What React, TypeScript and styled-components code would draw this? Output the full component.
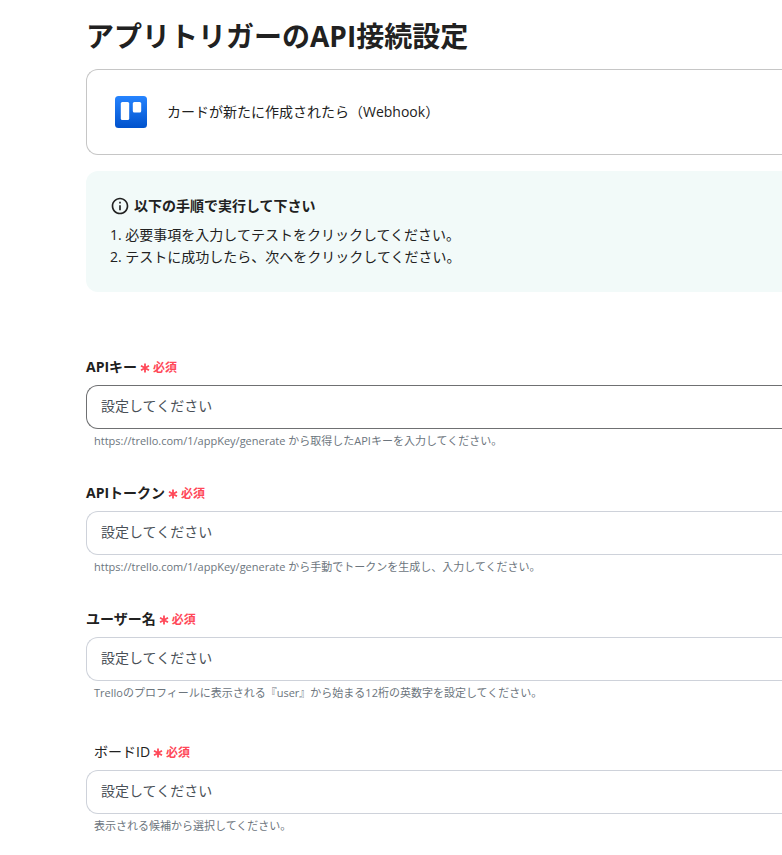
import React, { useId } from "react";
import styled, { createGlobalStyle } from "styled-components";

const GlobalStyle = createGlobalStyle`
  *, *::before, *::after { box-sizing: border-box; }
  body {
    margin: 0;
    background: #fff;
    color: #212121;
    font-family: "Open Sans", "Noto Sans CJK JP", sans-serif;
    font-size: 14px;
    line-height: 22px;
    overflow-x: hidden;
  }
`;

const Page = styled.main`
  padding: 16px 0 16px 86px;
`;

const Title = styled.h1`
  margin: 0 0 13px;
  font-size: 28px;
  line-height: 40px;
  font-weight: 700;
  white-space: nowrap;
`;

const TriggerCard = styled.section`
  display: flex;
  align-items: center;
  gap: 20px;
  min-height: 86px;
  padding: 0 28px;
  border: 1px solid #c6c6c6;
  border-right: 0;
  border-radius: 12px 0 0 12px;
`;

const Notice = styled.section`
  margin-top: 16px;
  padding: 24px;
  min-height: 121px;
  border-radius: 12px 0 0 12px;
  background: #f2faf9;
`;

const NoticeTitle = styled.h2`
  display: flex;
  align-items: center;
  gap: 4px;
  margin: 0 0 7px;
  font-size: 14px;
  line-height: 22px;
  font-weight: 700;
`;

const Steps = styled.ol`
  margin: 0;
  padding: 0;
  list-style-position: inside;
`;

const Form = styled.form`
  display: flex;
  flex-direction: column;
  gap: 33px;
  margin-top: 64px;
`;

const FieldBox = styled.div<{ $plain?: boolean }>`
  display: flex;
  flex-direction: column;
  padding-top: ${(p) => (p.$plain ? "7px" : "0")};
`;

const LabelRow = styled.div<{ $plain?: boolean }>`
  display: flex;
  align-items: center;
  gap: 3px;
  height: 22px;
  padding-left: ${(p) => (p.$plain ? "8px" : "0")};
  margin-bottom: 7px;
  font-weight: ${(p) => (p.$plain ? 400 : 700)};
`;

const Required = styled.span`
  display: flex;
  align-items: center;
  gap: 3px;
  padding-top: 2px;
  color: #ff4858;
  font-size: 12px;
  font-weight: 700;
`;

const Input = styled.input<{ $strong?: boolean }>`
  width: 100%;
  height: 44px;
  padding: 0 14px 4px;
  border: 1px solid ${(p) => (p.$strong ? "#6f7072" : "#ced2da")};
  border-right: 0;
  border-radius: 12px 0 0 12px;
  background: #fff;
  font: inherit;
  color: #212121;
  outline: none;
  &::placeholder { color: #495057; opacity: 1; }
`;

const Help = styled.p`
  margin: 3px 0 0 8px;
  color: #6c757d;
  font-size: 11px;
  line-height: 17px;
`;

const TrelloIcon = () => (
  <svg width="32" height="32" viewBox="0 0 32 32" aria-hidden="true">
    <defs>
      <linearGradient id="trello" x1="0" y1="0" x2="0" y2="1">
        <stop offset="0" stopColor="#2684ff" />
        <stop offset="1" stopColor="#0052cc" />
      </linearGradient>
    </defs>
    <rect width="32" height="32" rx="3.500" fill="url(#trello)" />
    <rect x="5.800" y="6" width="8.400" height="18" rx="1.500" fill="#fff" />
    <rect x="17.800" y="6" width="8.400" height="10.500" rx="1.500" fill="#fff" />
  </svg>
);

const InfoIcon = () => (
  <svg width="20" height="20" viewBox="0 0 24 24" fill="#212121" aria-hidden="true">
    <path d="M11 7h2v2h-2zm0 4h2v6h-2zm1-9C6.480 2 2 6.480 2 12s4.480 10 10 10 10-4.480 10-10S17.520 2 12 2zm0 18c-4.410 0-8-3.590-8-8s3.590-8 8-8 8 3.590 8 8-3.590 8-8 8z" />
  </svg>
);

const AsteriskIcon = () => (
  <svg width="10" height="10" viewBox="0 0 10 10" stroke="currentColor" strokeWidth="1.800" aria-hidden="true">
    <path d="M5 0.500v9M1 2.700l8 4.600M9 2.700l-8 4.600" />
  </svg>
);

type FieldProps = { label: string; help: string; strong?: boolean; plain?: boolean };

const Field = ({ label, help, strong, plain }: FieldProps) => {
  const id = useId();
  return (
    <FieldBox $plain={plain}>
      <LabelRow $plain={plain}>
        <label htmlFor={id}>{label}</label>
        <Required><AsteriskIcon />必須</Required>
      </LabelRow>
      <Input id={id} placeholder="設定してください" $strong={strong} aria-describedby={id + "-help"} required />
      <Help id={id + "-help"}>{help}</Help>
    </FieldBox>
  );
};

const fields: FieldProps[] = [
  { label: "APIキー", help: "https://trello.com/1/appKey/generate から取得したAPIキーを入力してください。", strong: true },
  { label: "APIトークン", help: "https://trello.com/1/appKey/generate から手動でトークンを生成し、入力してください。" },
  { label: "ユーザー名", help: "Trelloのプロフィールに表示される『user』から始まる12桁の英数字を設定してください。" },
  { label: "ボードID", help: "表示される候補から選択してください。", plain: true },
];

export default function App() {
  return (
    <>
      <GlobalStyle />
      <Page>
        <Title>アプリトリガーのAPI接続設定</Title>
        <TriggerCard><TrelloIcon /><span>カードが新たに作成されたら（Webhook）</span></TriggerCard>
        <Notice>
          <NoticeTitle><InfoIcon />以下の手順で実行して下さい</NoticeTitle>
          <Steps>
            <li>必要事項を入力してテストをクリックしてください。</li>
            <li>テストに成功したら、次へをクリックしてください。</li>
          </Steps>
        </Notice>
        <Form>{fields.map((f) => <Field key={f.label} {...f} />)}</Form>
      </Page>
    </>
  );
}
